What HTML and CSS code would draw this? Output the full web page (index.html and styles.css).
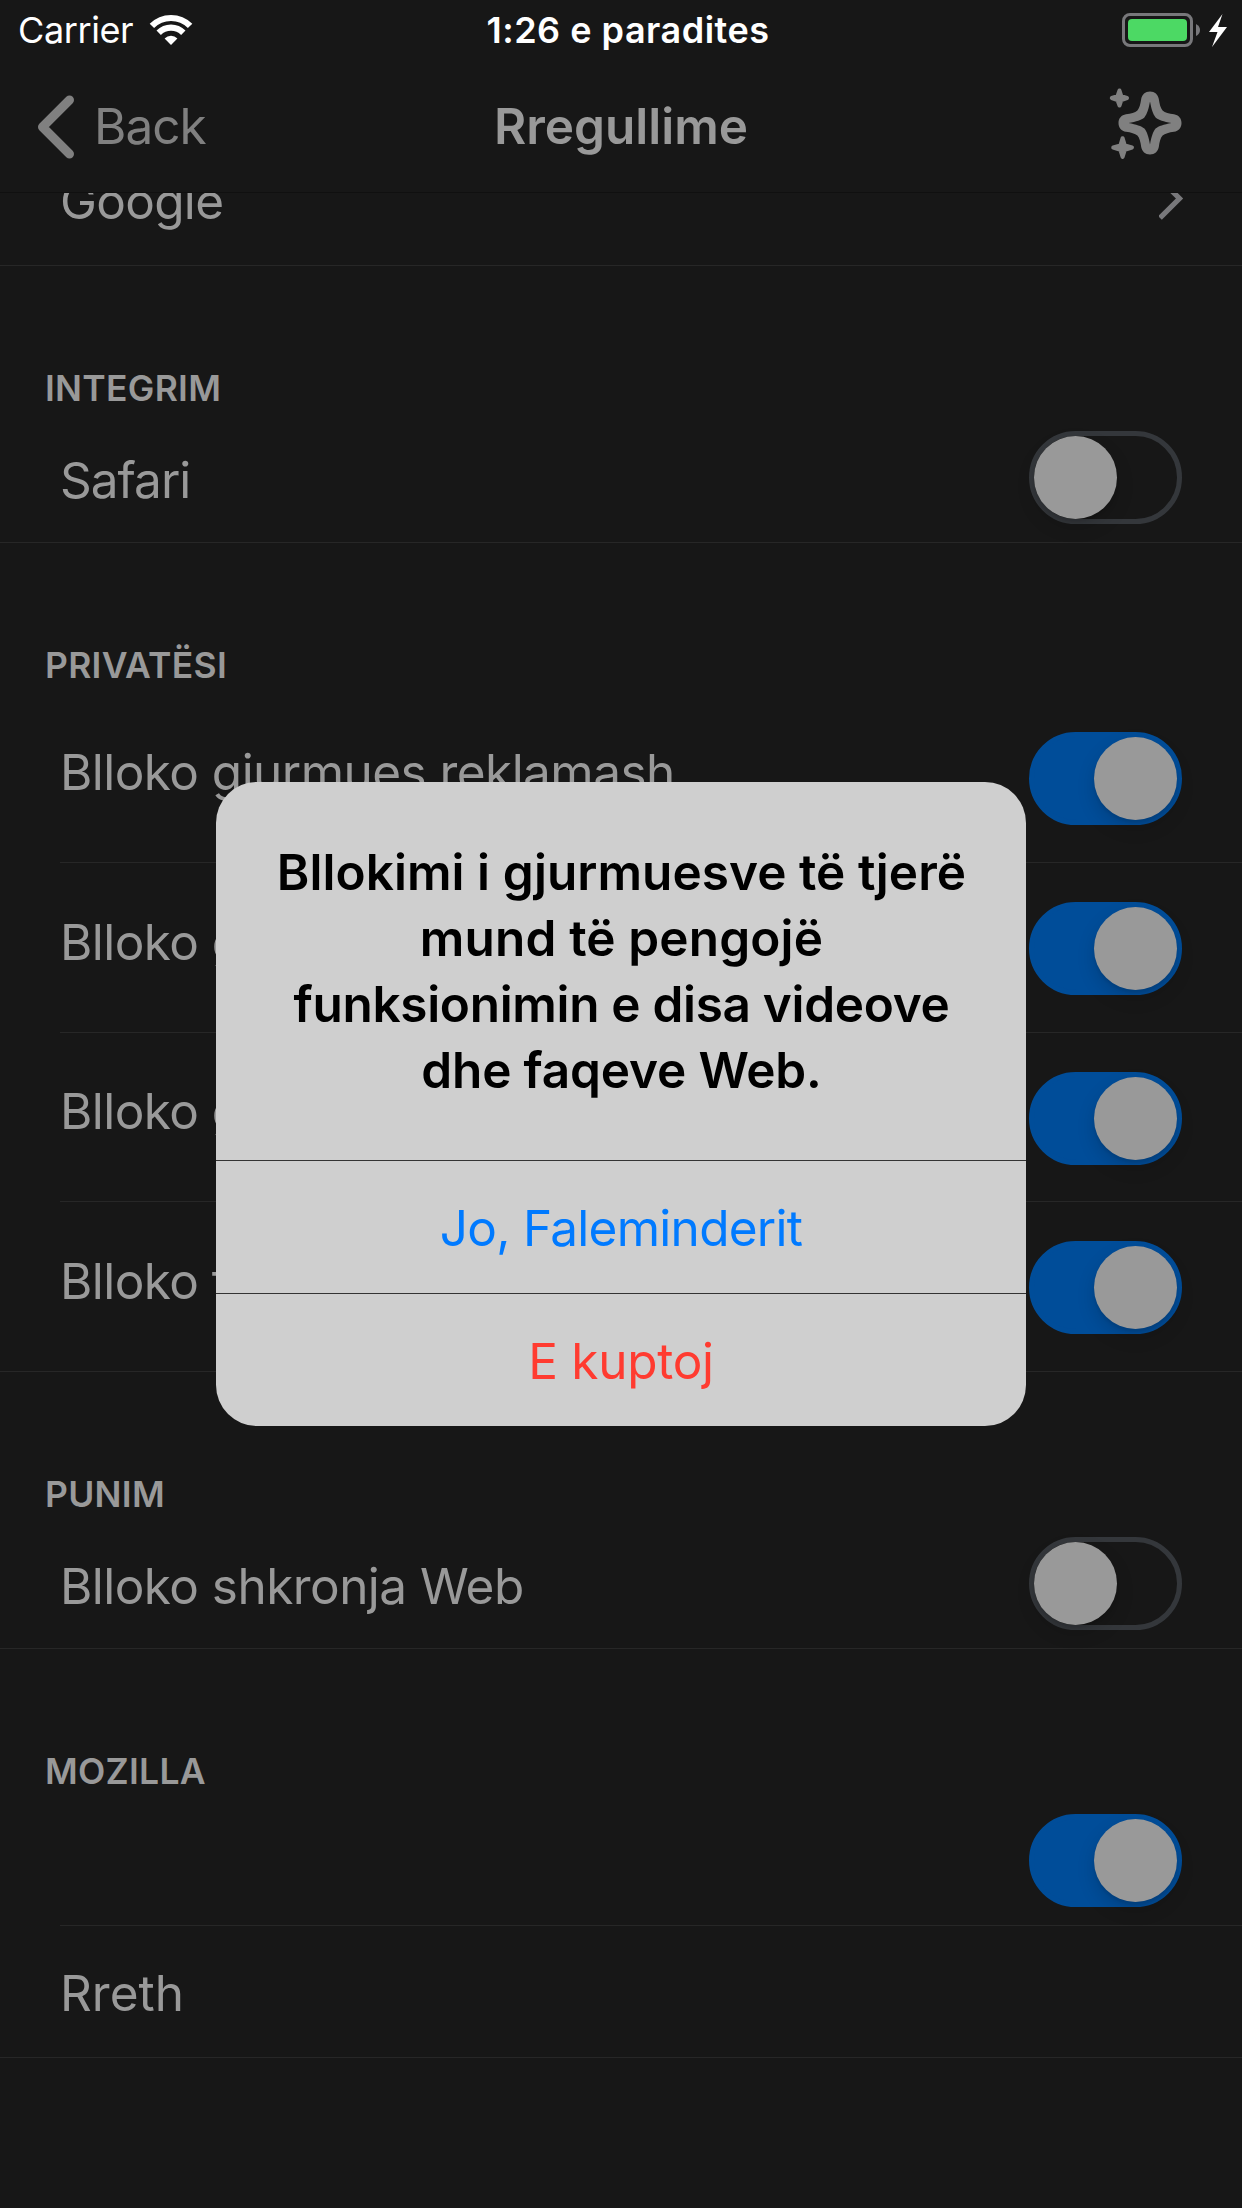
FILE: index.html
```html
<!DOCTYPE html>
<html lang="sq">
<head>
<meta charset="utf-8">
<title>Rregullime</title>
<link rel="stylesheet" href="styles.css">
</head>
<body>
<div class="screen">
  <header class="status">
    <div class="status-left">
      <span class="carrier">Carrier</span>
      <svg class="wifi" width="44" height="32" viewBox="0 0 44 32" fill="none" stroke="#fff" stroke-width="6.2">
        <path d="M2.9 11.9A27 27 0 0 1 41.1 11.9"/>
        <path d="M9.7 18.7A17.4 17.4 0 0 1 34.3 18.7"/>
        <path d="M22 31L15.6 24.4A9.2 9.2 0 0 1 28.4 24.4Z" fill="#fff" stroke="none"/>
      </svg>
    </div>
    <span class="time">1:26 e paradites</span>
    <div class="status-right">
      <svg width="108" height="36" viewBox="0 0 108 36">
        <rect x="1.5" y="1.5" width="68" height="31" rx="6.5" fill="none" stroke="#78787b" stroke-width="3"/>
        <rect x="6" y="6" width="59" height="22" rx="4" fill="#4cd964"/>
        <path d="M74 11Q78 13 78 17T74 23Z" fill="#78787b"/>
        <path d="M100.5 1L96 14H105L90 34L95.5 19H87Z" fill="#fff"/>
      </svg>
    </div>
  </header>

  <nav class="navbar">
    <a class="back">
      <svg width="40" height="66" viewBox="0 0 40 66" fill="none" stroke="#808080" stroke-width="9" stroke-linecap="round" stroke-linejoin="round">
        <path d="M32.5 6L5.5 33L32.5 60"/>
      </svg>
      <span>Back</span>
    </a>
    <h1>Rregullime</h1>
    <svg class="sparkle" width="76" height="76" viewBox="-43 -37 76 76" fill="#808080">
      <path fill-rule="evenodd" d="M0 -31.5C4.8 -31.5 8 -28.5 8.8 -24C9.6 -19 10.4 -15 12.6 -12.6C15 -10.4 19 -9.6 24 -8.8C28.5 -8 31.5 -4.8 31.5 0C31.5 4.8 28.5 8 24 8.8C19 9.6 15 10.4 12.6 12.6C10.4 15 9.6 19 8.8 24C8 28.5 4.8 31.5 0 31.5C-4.8 31.5 -8 28.5 -8.8 24C-9.6 19 -10.4 15 -12.6 12.6C-15 10.4 -19 9.6 -24 8.8C-28.5 8 -31.5 4.8 -31.5 0C-31.5 -4.8 -28.5 -8 -24 -8.8C-19 -9.6 -15 -10.4 -12.6 -12.6C-10.4 -15 -9.6 -19 -8.8 -24C-8 -28.5 -4.8 -31.5 0 -31.5ZM0 -21.5C-1.5 -13.5 -3 -8.8 -5.6 -5.6C-8.8 -3 -13.5 -1.5 -21.5 0C-13.5 1.5 -8.8 3 -5.6 5.6C-3 8.8 -1.5 13.5 0 21.5C1.5 13.5 3 8.8 5.6 5.6C8.8 3 13.5 1.5 21.5 0C13.5 -1.5 8.8 -3 5.6 -5.6C3 -8.8 1.5 -13.5 0 -21.5Z"/>
      <g stroke="#808080" stroke-width="4" stroke-linejoin="round">
        <path d="M-30.5 -32.5L-28.7 -26.9L-23 -25L-28.7 -22.9L-30.5 -17.5L-32.5 -22.9L-38.2 -25L-32.5 -26.9Z"/>
        <path d="M-27.4 15.2L-25.2 22.4L-18 24.5L-25.2 26.8L-27.4 34L-29.6 26.8L-36.8 24.5L-29.6 22.4Z"/>
      </g>
    </svg>
  </nav>

  <main class="list">
    <section class="group first">
      <div class="row"><span class="label google">Google</span>
        <svg class="disclosure" width="26" height="44" viewBox="0 0 26 44" fill="none" stroke="#78787b" stroke-width="5.2"><path d="M2.5 2.5L20.5 20.5L1 40"/></svg>
      </div>
    </section>
    <section class="group">
      <h2>INTEGRIM</h2>
      <div class="row"><span class="label safari">Safari</span><span class="toggle"></span></div>
    </section>
    <section class="group privacy">
      <h2>PRIVATËSI</h2>
      <div class="row tall"><span class="label">Blloko gjurmues reklamash</span><span class="toggle on"></span></div>
      <div class="row tall"><span class="label">Blloko gjurmues analizash</span><span class="toggle on"></span></div>
      <div class="row tall short"><span class="label">Blloko gjurmues shoqërorë</span><span class="toggle on"></span></div>
      <div class="row tall"><span class="label">Blloko të tjerë gjurmues</span><span class="toggle on"></span></div>
    </section>
    <section class="group">
      <h2>PUNIM</h2>
      <div class="row"><span class="label fonts">Blloko shkronja Web</span><span class="toggle"></span></div>
    </section>
    <section class="group">
      <h2>MOZILLA</h2>
      <div class="row"><span class="label"></span><span class="toggle on"></span></div>
      <div class="row"><span class="label about">Rreth</span></div>
    </section>
  </main>

  <div class="alert" role="alertdialog">
    <p class="message">
      <span class="l1">Bllokimi i gjurmuesve të tjerë</span>
      <span class="l2">mund të pengojë</span>
      <span class="l3">funksionimin e disa videove</span>
      <span class="l4">dhe faqeve Web.</span>
    </p>
    <div class="action cancel">Jo, Faleminderit</div>
    <div class="action destructive">E kuptoj</div>
  </div>
</div>
</body>
</html>
```
FILE: styles.css
```css
* { box-sizing: border-box; margin: 0; padding: 0; }

body {
  background: #171717;
  color: #999;
  font-family: "Inter", "Liberation Sans", sans-serif;
  font-size: 49.5px;
}

svg { display: block; flex: none; }

.screen {
  position: relative;
  display: flex;
  flex-direction: column;
  width: 1242px;
  height: 2208px;
  overflow: hidden;
}

/* Status bar */
.status {
  display: grid;
  grid-template-columns: 1fr auto 1fr;
  align-items: center;
  height: 60px;
  padding: 0 12px 0 18px;
  color: #fff;
  font-size: 36px;
  line-height: 60px;
}
.status-left { display: flex; align-items: center; gap: 16px; }
.carrier { letter-spacing: -0.4px; }
.time { font-weight: 600; letter-spacing: 0.5px; padding-left: 8px; }
.status-right { display: flex; justify-content: flex-end; padding-top: 2px; }

/* Navigation bar */
.navbar {
  display: grid;
  grid-template-columns: 1fr auto 1fr;
  align-items: center;
  height: 133px;
  padding: 0 59px 0 37px;
  border-bottom: 1px solid #101010;
}
.back {
  display: flex;
  align-items: center;
  gap: 17px;
  color: #808080;
  letter-spacing: -1px;
}
.back svg { margin-top: 2px; }
.navbar h1 { font-size: inherit; font-weight: 600; padding: 0 0 0 22px; }
.sparkle { justify-self: end; margin-bottom: 4px; }

/* Settings list, scrolled part way under the bar */
.list { flex: 1; overflow: hidden; }
.group.first { margin-top: -59px; }

h2 {
  height: 145px;
  padding: 101px 0 0 45px;
  font-size: 35.5px;
  font-weight: 600;
  line-height: 44px;
  letter-spacing: 0.27px;
}
.privacy h2 { height: 150px; }

.row {
  display: flex;
  align-items: center;
  justify-content: space-between;
  height: 132px;
  margin-left: 60px;
  padding-right: 60px;
  border-bottom: 1px solid #272727;
}
.row:last-child { margin-left: 0; padding-left: 60px; }
.row.tall { height: 170px; }
.row.short { height: 169px; }

.label { letter-spacing: -0.55px; line-height: 60px; }
.tall .label { padding-bottom: 12px; }
.google { letter-spacing: -0.7px; padding-top: 2px; }
.safari { letter-spacing: -1px; padding-top: 6px; }
.fonts { padding-top: 6px; }
.about { letter-spacing: 0; padding-top: 2px; }

.disclosure { margin-right: -3px; }

.toggle {
  display: flex;
  align-items: center;
  flex: none;
  width: 153px;
  height: 93px;
  margin-top: 2px;
  border: 5px solid #34373b;
  border-radius: 47px;
}
.toggle::before {
  content: "";
  width: 83px;
  height: 83px;
  border-radius: 50%;
  background: #999;
  box-shadow: 0 8px 18px rgba(0, 0, 0, 0.15), 0 3px 3px rgba(0, 0, 0, 0.08);
}
.toggle.on {
  justify-content: flex-end;
  border-color: #004d99;
  background: #004d99;
}

/* Alert */
.alert {
  position: absolute;
  left: 216px;
  top: 782px;
  width: 810px;
  height: 644px;
  border-radius: 41px;
  background: #cfcfcf;
  overflow: hidden;
  text-align: center;
}
.message {
  height: 378px;
  padding: 57px 0 0 1px;
  color: #000;
  font-weight: 600;
  line-height: 66px;
}
.message span { display: block; }
.l1 { letter-spacing: 0.05px; }
.l2 { letter-spacing: 0.15px; }
.l3 { letter-spacing: -0.31px; }
.l4 { letter-spacing: -0.16px; }
.action {
  height: 133px;
  border-top: 1px solid #333;
  line-height: 134px;
}
.cancel { color: #007aff; letter-spacing: -0.72px; }
.destructive { color: #ff3b30; letter-spacing: -0.26px; }
```
